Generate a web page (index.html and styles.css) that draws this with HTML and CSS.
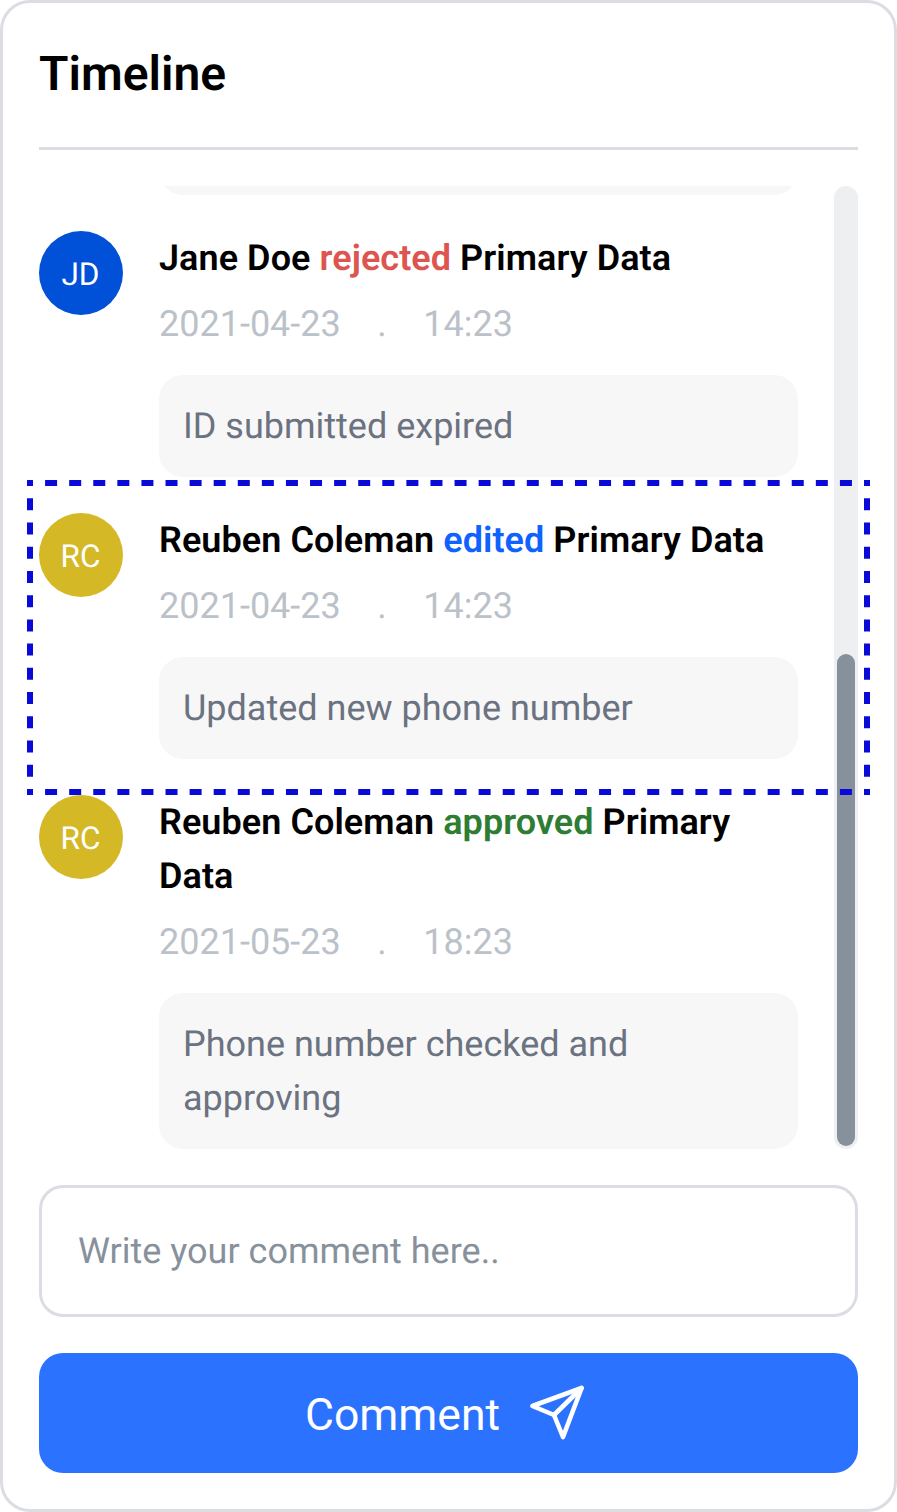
FILE: index.html
```html
<!DOCTYPE html>
<html lang="en">
<head>
<meta charset="utf-8">
<title>Timeline</title>
<link rel="stylesheet" href="styles.css">
</head>
<body>
<main class="card">
  <header class="card-header"><h1 class="card-title">Timeline</h1></header>
  <section class="timeline">
    <div class="feed">
      <div class="bubble bubble-cut"></div>
      <article class="entry">
        <div class="avatar avatar-blue">JD</div>
        <div class="entry-body">
          <p class="entry-title">Jane Doe <span class="rejected">rejected</span> Primary Data</p>
          <p class="entry-meta"><span>2021-04-23</span><span>.</span><span>14:23</span></p>
          <div class="bubble">ID submitted expired</div>
        </div>
      </article>
      <article class="entry">
        <div class="avatar avatar-gold">RC</div>
        <div class="entry-body">
          <p class="entry-title">Reuben Coleman <span class="edited">edited</span> Primary Data</p>
          <p class="entry-meta"><span>2021-04-23</span><span>.</span><span>14:23</span></p>
          <div class="bubble">Updated new phone number</div>
        </div>
      </article>
      <article class="entry">
        <div class="avatar avatar-gold">RC</div>
        <div class="entry-body">
          <p class="entry-title">Reuben Coleman <span class="approved">approved</span> Primary Data</p>
          <p class="entry-meta"><span>2021-05-23</span><span>.</span><span>18:23</span></p>
          <div class="bubble">Phone number checked and approving</div>
        </div>
      </article>
    </div>
    <div class="scroll-track"><div class="scroll-thumb"></div></div>
    <svg class="focus-outline" viewBox="0 0 843 315" width="843" height="315" aria-hidden="true">
      <path class="dash-h" d="M0 3H843M0 312H843"/>
      <path class="dash-v" d="M3 0V315M840 0V315"/>
    </svg>
  </section>
  <div class="comment-input">Write your comment here..</div>
  <button class="comment-button" type="button">
    <span class="comment-label">Comment</span>
    <svg class="send-icon" viewBox="0 0 60 60" width="60" height="60" fill="none" stroke="currentColor" stroke-width="4.6" stroke-linecap="round" stroke-linejoin="round" aria-hidden="true">
      <path d="M54.6 4 5.4 22 27 31 36 53Z"/>
      <path d="M54.6 4 27 31"/>
    </svg>
  </button>
</main>
</body>
</html>
```

FILE: styles.css
```css
* { box-sizing: border-box; }
html, body { margin: 0; padding: 0; background: #fff; }
body { font-family: Roboto, "Liberation Sans", sans-serif; text-rendering: geometricPrecision; }

.card {
  width: 897px;
  height: 1512px;
  border: 3px solid #dcdde2;
  border-radius: 30px;
  padding: 36px;
  display: flex;
  flex-direction: column;
  background: #fff;
}

.card-header {
  height: 111px;
  border-bottom: 3px solid #dcdde2;
  flex: none;
}
.card-title {
  margin: 0;
  font-size: 48px;
  line-height: 70px;
  font-weight: 600;
  color: #000;
}

.timeline {
  position: relative;
  margin-top: 36px;
  height: 963px;
  display: flex;
  justify-content: space-between;
  flex: none;
}

.feed {
  width: 759px;
  height: 963px;
  overflow: hidden;
  display: flex;
  flex-direction: column;
  gap: 36px;
}

.entry { display: flex; gap: 36px; flex: none; }
.entry-body { width: 639px; }

.avatar {
  width: 84px;
  height: 84px;
  border-radius: 50%;
  flex: none;
  display: flex;
  align-items: center;
  justify-content: center;
  color: #fff;
  font-size: 31.5px;
  padding: 3px 1px 0 0;
}
.avatar-blue { background: #0050d8; }
.avatar-gold { background: #d4b826; }

.entry-title {
  margin: 0;
  font-size: 36px;
  line-height: 54px;
  font-weight: 600;
  letter-spacing: 0.06px;
  color: #000;
}
.rejected { color: #dc5550; }
.edited { color: #0f62fe; }
.approved { color: #2e7d32; }

.entry-meta {
  margin: 12px 0 24px;
  display: flex;
  gap: 36.5px;
  font-size: 36px;
  line-height: 54px;
  color: #bbc1c8;
}

.bubble {
  background: #f7f7f8;
  border-radius: 24px;
  padding: 24px;
  font-size: 36px;
  line-height: 54px;
  color: #6b7280;
}
.bubble-cut {
  margin: -93px 0 0 120px;
  width: 639px;
  height: 102px;
  flex: none;
}

.scroll-track {
  width: 24px;
  height: 963px;
  padding: 468px 3px 3px;
  border-radius: 12px;
  background: #eeeff1;
}
.scroll-thumb {
  height: 492px;
  border-radius: 9px;
  background: #87919c;
}

.focus-outline {
  position: absolute;
  left: -12px;
  top: 294px;
  pointer-events: none;
  fill: none;
  stroke: #0a0ad8;
  stroke-width: 6;
}
.dash-h { stroke-dasharray: 12 12.086; stroke-dashoffset: 6; }
.dash-v { stroke-dasharray: 12 12.23; stroke-dashoffset: 6; }

.comment-input {
  margin-top: 36px;
  height: 132px;
  flex: none;
  border: 3px solid #dcdde2;
  border-radius: 24px;
  padding: 0 36px;
  display: flex;
  align-items: center;
  font-size: 36px;
  color: #87919c;
}

.comment-button {
  margin-top: 36px;
  height: 120px;
  flex: none;
  border: 0;
  border-radius: 24px;
  padding: 2px 5px 0 0;
  background: #2b73ff;
  color: #fff;
  font-family: inherit;
  font-size: 44.5px;
  display: flex;
  align-items: center;
  justify-content: center;
  gap: 27px;
}
.comment-label { padding-top: 1px; }
.send-icon { flex: none; }
```
